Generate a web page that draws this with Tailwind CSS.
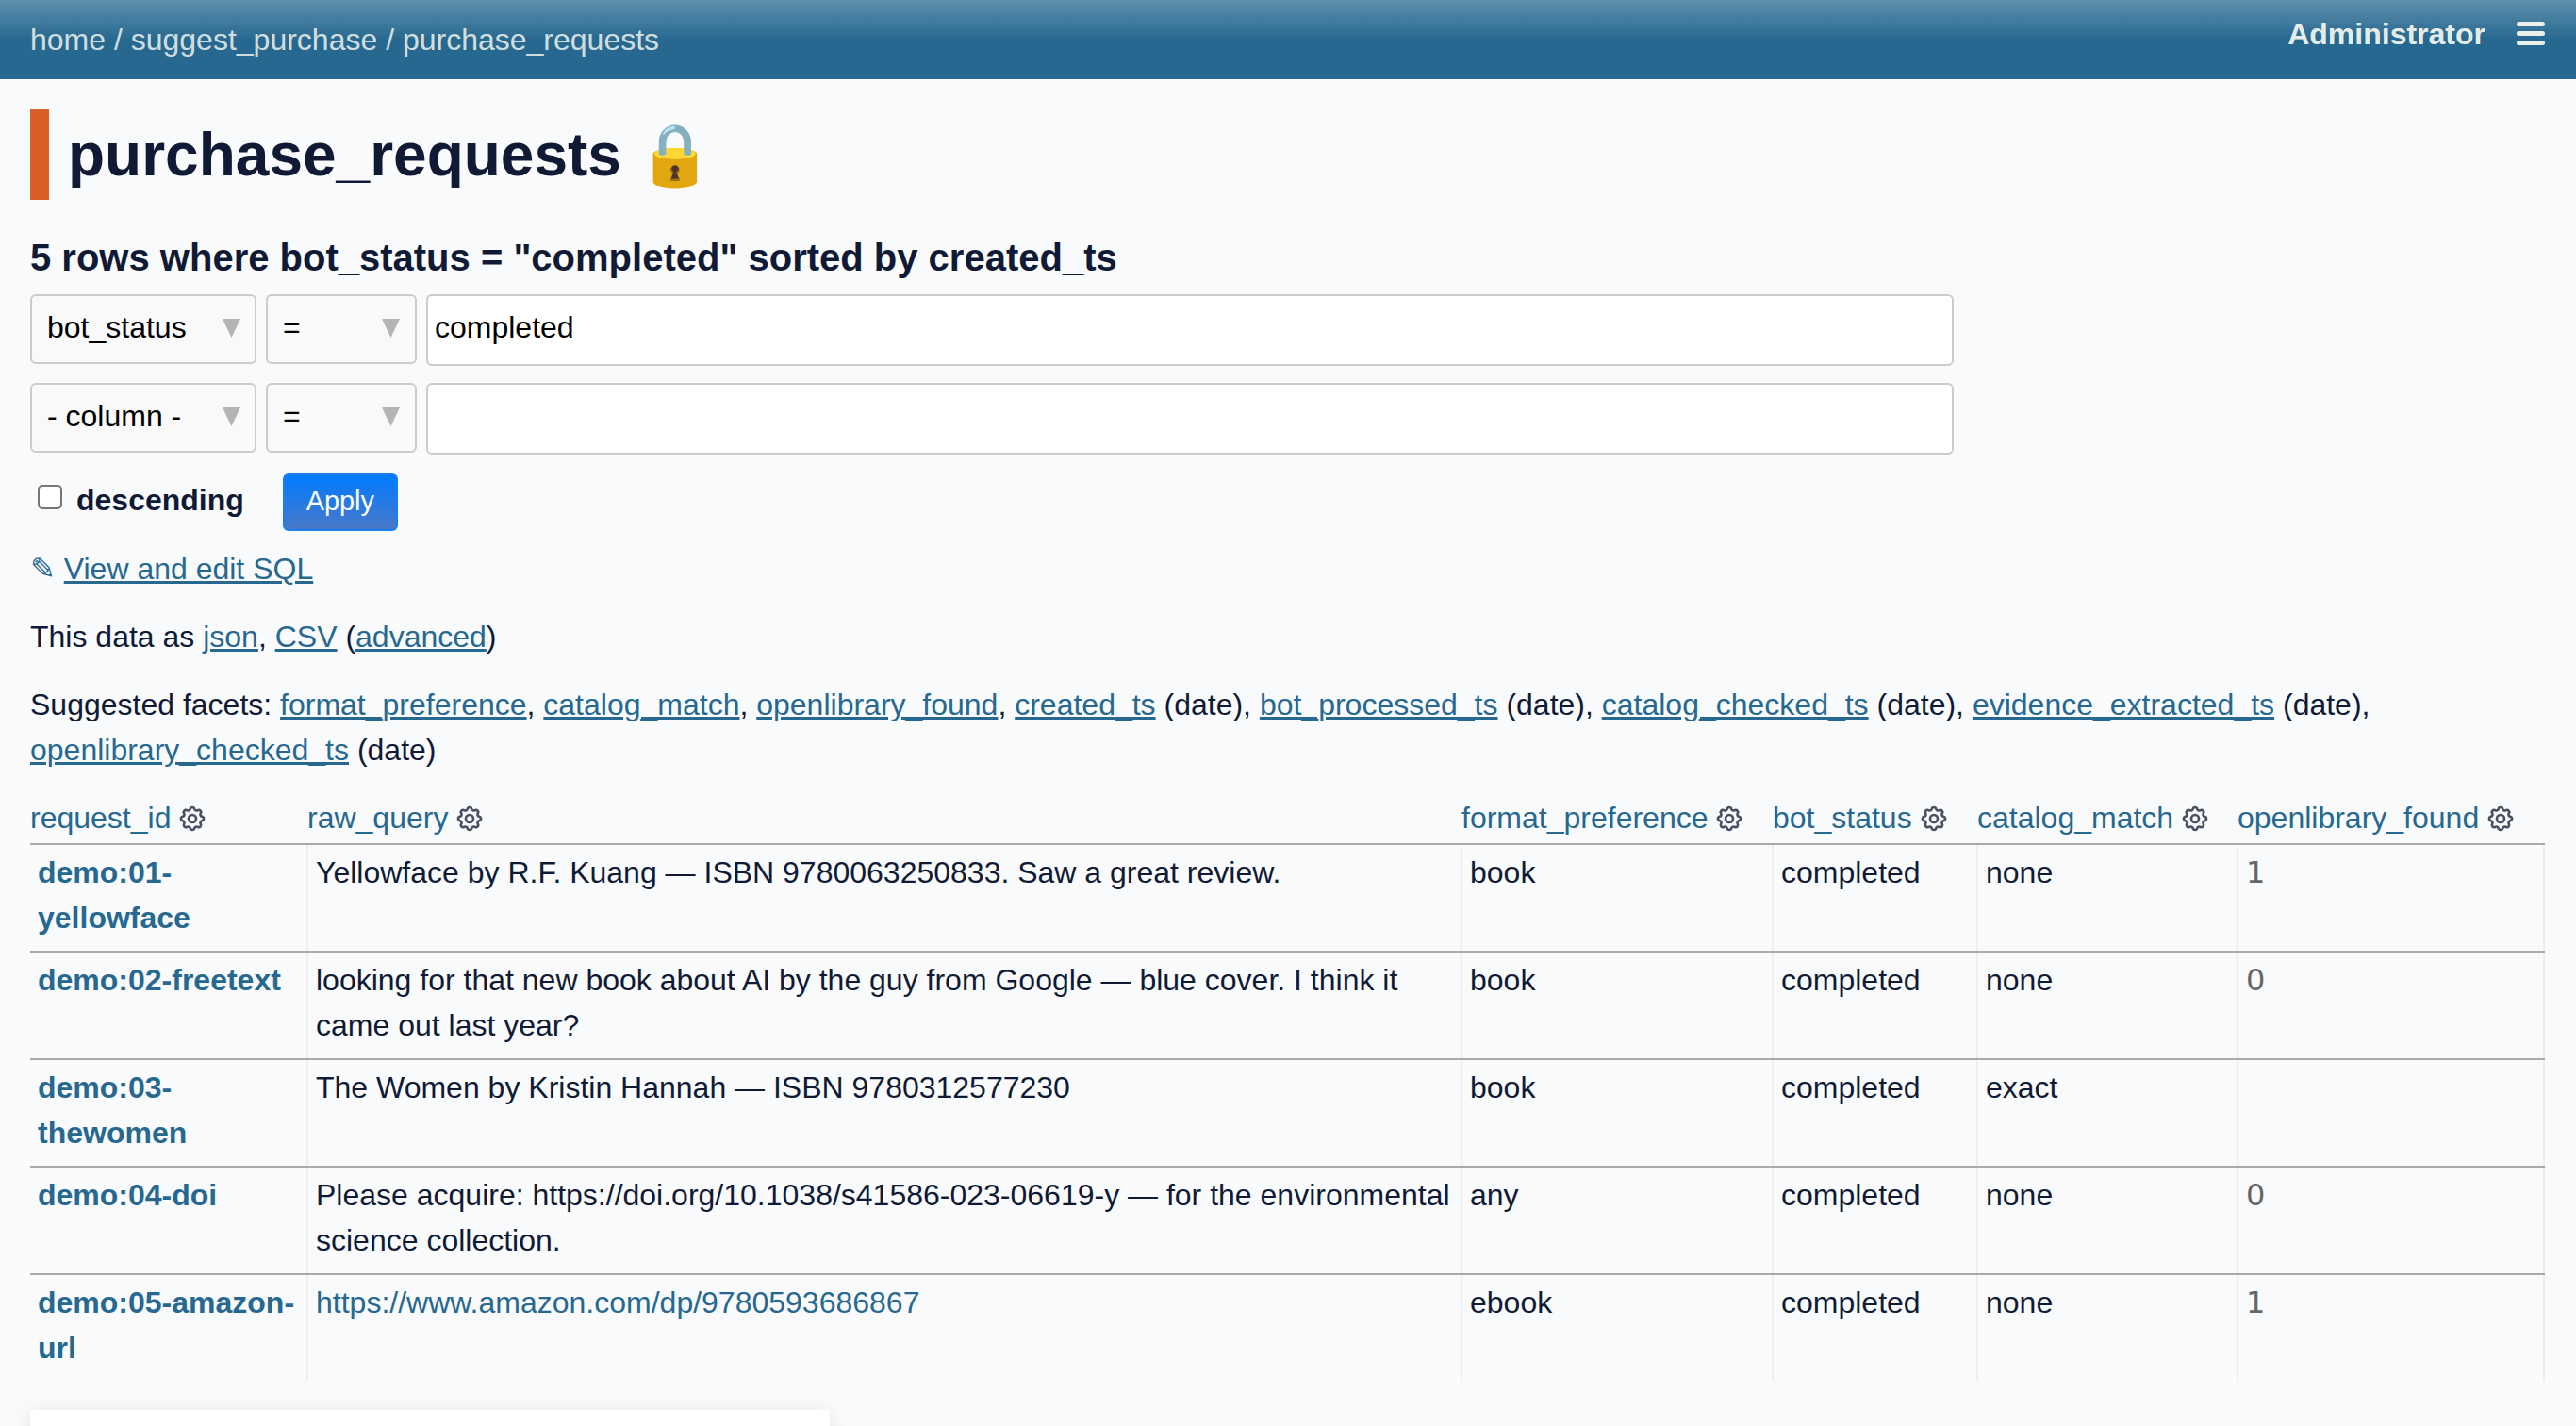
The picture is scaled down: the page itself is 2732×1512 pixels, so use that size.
<!DOCTYPE html>
<html lang="en">
<head>
<meta charset="utf-8">
<title>purchase_requests</title>
<script src="https://cdn.jsdelivr.net/npm/@tailwindcss/browser@4"></script>
</head>
<body class="h-[1512px] overflow-hidden bg-[#f8fafb] text-[32px] leading-[48px] text-[#111a35] font-['Liberation_Sans','DejaVu_Sans','Noto_Color_Emoji',sans-serif]">
<header class="h-[84px] bg-[linear-gradient(180deg,#6090ad_0%,#276890_50%)] pl-[32px] pr-[33px] pt-[18px] flex justify-between items-start text-[#fffff4e6]">
  <nav class="text-[#fffff4cc]"><a href="#">home</a> / <a href="#">suggest_purchase</a> / <a href="#">purchase_requests</a></nav>
  <div class="flex items-start gap-[33px]">
    <span class="font-bold leading-[37px]">Administrator</span>
    <div class="flex flex-col gap-[5px] w-[30px] pt-[5px]">
      <span class="block h-[5px] rounded-full bg-[#fffff4e6]"></span>
      <span class="block h-[5px] rounded-full bg-[#fffff4e6]"></span>
      <span class="block h-[5px] rounded-full bg-[#fffff4e6]"></span>
    </div>
  </div>
</header>
<main class="px-[32px]">
  <div class="mt-[32px] h-[96px] border-l-[20px] border-l-[#d95f28] pl-[20px]">
    <h1 class="text-[64px] leading-[96px] font-bold">purchase_requests <span>🔒</span></h1>
  </div>
  <h3 class="mt-[30px] mb-[8px] text-[40px] leading-[62px] font-bold">5 rows where bot_status = "completed" sorted by created_ts</h3>
  <form>
    <div class="flex items-start gap-[10px] mb-[18px]">
      <div class="relative w-[240px] h-[74px]">
        <select class="appearance-none w-full h-full border-2 border-[#ccc] rounded-[6px] bg-[#f9f9f9] pl-[16px] pb-[4px] text-black"><option>bot_status</option></select>
        <svg class="absolute left-[204px] top-[26px]" width="19" height="20" viewBox="0 0 19 20"><polygon points="0,0 19,0 9.5,20" fill="#b4b4b4"/></svg>
      </div>
      <div class="relative w-[160px] h-[74px]">
        <select class="appearance-none w-full h-full border-2 border-[#ccc] rounded-[6px] bg-[#f9f9f9] pl-[16px] pb-[4px] text-black"><option>=</option></select>
        <svg class="absolute left-[123px] top-[26px]" width="19" height="20" viewBox="0 0 19 20"><polygon points="0,0 19,0 9.5,20" fill="#b4b4b4"/></svg>
      </div>
      <input class="w-[1620px] h-[76px] border-2 border-[#ccc] rounded-[6px] bg-white px-[7px] pb-[5px] text-black" value="completed">
    </div>
    <div class="flex items-start gap-[10px]">
      <div class="relative w-[240px] h-[74px]">
        <select class="appearance-none w-full h-full border-2 border-[#ccc] rounded-[6px] bg-[#f9f9f9] pl-[16px] pb-[4px] text-black"><option>- column -</option></select>
        <svg class="absolute left-[204px] top-[26px]" width="19" height="20" viewBox="0 0 19 20"><polygon points="0,0 19,0 9.5,20" fill="#b4b4b4"/></svg>
      </div>
      <div class="relative w-[160px] h-[74px]">
        <select class="appearance-none w-full h-full border-2 border-[#ccc] rounded-[6px] bg-[#f9f9f9] pl-[16px] pb-[4px] text-black"><option>=</option></select>
        <svg class="absolute left-[123px] top-[26px]" width="19" height="20" viewBox="0 0 19 20"><polygon points="0,0 19,0 9.5,20" fill="#b4b4b4"/></svg>
      </div>
      <input class="w-[1620px] h-[76px] border-2 border-[#ccc] rounded-[6px] bg-white px-[7px] text-black" value="">
    </div>
    <div class="mt-[20px] flex items-start h-[61px]">
      <label class="flex items-start font-bold pl-[8px] mt-[4px]">
        <span class="block mt-[8px] w-[26px] h-[26px] border-2 border-[#767676] rounded-[5px] bg-white mr-[15px]"></span>descending
      </label>
      <button type="button" class="ml-[41px] w-[122px] h-[61px] rounded-[6px] border-2 border-[#1a7ef0] bg-[linear-gradient(180deg,#007bff,#4a78c8)] text-white text-[28.8px] leading-[40px] pb-[3px]">Apply</button>
    </div>
  </form>
  <p class="mt-[16px] text-[#276890]"><span>✎</span> <a href="#" class="underline">View and edit SQL</a></p>
  <p class="mt-[24px]">This data as <a href="#" class="underline text-[#276890]">json</a>, <a href="#" class="underline text-[#276890]">CSV</a> (<a href="#" class="underline text-[#276890]">advanced</a>)</p>
  <p class="mt-[24px]">Suggested facets: <a href="#" class="underline text-[#276890]">format_preference</a>, <a href="#" class="underline text-[#276890]">catalog_match</a>, <a href="#" class="underline text-[#276890]">openlibrary_found</a>, <a href="#" class="underline text-[#276890]">created_ts</a> (date), <a href="#" class="underline text-[#276890]">bot_processed_ts</a> (date), <a href="#" class="underline text-[#276890]">catalog_checked_ts</a> (date), <a href="#" class="underline text-[#276890]">evidence_extracted_ts</a> (date), <a href="#" class="underline text-[#276890]">openlibrary_checked_ts</a> (date)</p>
  <table class="mt-[24px] table-fixed border-collapse w-[2667px]">
    <colgroup>
      <col class="w-[294px]"><col class="w-[1224px]"><col class="w-[330px]"><col class="w-[217px]"><col class="w-[276px]"><col class="w-[325px]">
    </colgroup>
    <thead>
      <tr class="text-left">
        <th class="font-normal whitespace-nowrap border-b-2 border-b-[#aaa] pb-[3px]"><a href="#" class="text-[#276890]">request_id</a> <svg class="inline -ml-[2px] align-[-6px] text-[#4a4f63]" width="32" height="32" viewBox="0 0 24 24" fill="none" stroke="currentColor" stroke-width="2" stroke-linecap="round" stroke-linejoin="round"><path d="M10.325 4.317c.426-1.756 2.924-1.756 3.35 0a1.724 1.724 0 002.573 1.066c1.543-.94 3.31.826 2.37 2.37a1.724 1.724 0 001.065 2.572c1.756.426 1.756 2.924 0 3.35a1.724 1.724 0 00-1.066 2.573c.94 1.543-.826 3.31-2.37 2.37a1.724 1.724 0 00-2.572 1.065c-.426 1.756-2.924 1.756-3.35 0a1.724 1.724 0 00-2.573-1.066c-1.543.94-3.31-.826-2.37-2.37a1.724 1.724 0 00-1.065-2.572c-1.756-.426-1.756-2.924 0-3.35a1.724 1.724 0 001.066-2.573c-.94-1.543.826-3.31 2.37-2.37.996.608 2.296.07 2.572-1.065z"/><path d="M15 12a3 3 0 11-6 0 3 3 0 016 0z"/></svg></th>
        <th class="font-normal whitespace-nowrap border-b-2 border-b-[#aaa] pb-[3px]"><a href="#" class="text-[#276890]">raw_query</a> <svg class="inline -ml-[2px] align-[-6px] text-[#4a4f63]" width="32" height="32" viewBox="0 0 24 24" fill="none" stroke="currentColor" stroke-width="2" stroke-linecap="round" stroke-linejoin="round"><path d="M10.325 4.317c.426-1.756 2.924-1.756 3.35 0a1.724 1.724 0 002.573 1.066c1.543-.94 3.31.826 2.37 2.37a1.724 1.724 0 001.065 2.572c1.756.426 1.756 2.924 0 3.35a1.724 1.724 0 00-1.066 2.573c.94 1.543-.826 3.31-2.37 2.37a1.724 1.724 0 00-2.572 1.065c-.426 1.756-2.924 1.756-3.35 0a1.724 1.724 0 00-2.573-1.066c-1.543.94-3.31-.826-2.37-2.37a1.724 1.724 0 00-1.065-2.572c-1.756-.426-1.756-2.924 0-3.35a1.724 1.724 0 001.066-2.573c-.94-1.543.826-3.31 2.37-2.37.996.608 2.296.07 2.572-1.065z"/><path d="M15 12a3 3 0 11-6 0 3 3 0 016 0z"/></svg></th>
        <th class="font-normal whitespace-nowrap border-b-2 border-b-[#aaa] pb-[3px]"><a href="#" class="text-[#276890]">format_preference</a> <svg class="inline -ml-[2px] align-[-6px] text-[#4a4f63]" width="32" height="32" viewBox="0 0 24 24" fill="none" stroke="currentColor" stroke-width="2" stroke-linecap="round" stroke-linejoin="round"><path d="M10.325 4.317c.426-1.756 2.924-1.756 3.35 0a1.724 1.724 0 002.573 1.066c1.543-.94 3.31.826 2.37 2.37a1.724 1.724 0 001.065 2.572c1.756.426 1.756 2.924 0 3.35a1.724 1.724 0 00-1.066 2.573c.94 1.543-.826 3.31-2.37 2.37a1.724 1.724 0 00-2.572 1.065c-.426 1.756-2.924 1.756-3.35 0a1.724 1.724 0 00-2.573-1.066c-1.543.94-3.31-.826-2.37-2.37a1.724 1.724 0 00-1.065-2.572c-1.756-.426-1.756-2.924 0-3.35a1.724 1.724 0 001.066-2.573c-.94-1.543.826-3.31 2.37-2.37.996.608 2.296.07 2.572-1.065z"/><path d="M15 12a3 3 0 11-6 0 3 3 0 016 0z"/></svg></th>
        <th class="font-normal whitespace-nowrap border-b-2 border-b-[#aaa] pb-[3px]"><a href="#" class="text-[#276890]">bot_status</a> <svg class="inline -ml-[2px] align-[-6px] text-[#4a4f63]" width="32" height="32" viewBox="0 0 24 24" fill="none" stroke="currentColor" stroke-width="2" stroke-linecap="round" stroke-linejoin="round"><path d="M10.325 4.317c.426-1.756 2.924-1.756 3.35 0a1.724 1.724 0 002.573 1.066c1.543-.94 3.31.826 2.37 2.37a1.724 1.724 0 001.065 2.572c1.756.426 1.756 2.924 0 3.35a1.724 1.724 0 00-1.066 2.573c.94 1.543-.826 3.31-2.37 2.37a1.724 1.724 0 00-2.572 1.065c-.426 1.756-2.924 1.756-3.35 0a1.724 1.724 0 00-2.573-1.066c-1.543.94-3.31-.826-2.37-2.37a1.724 1.724 0 00-1.065-2.572c-1.756-.426-1.756-2.924 0-3.35a1.724 1.724 0 001.066-2.573c-.94-1.543.826-3.31 2.37-2.37.996.608 2.296.07 2.572-1.065z"/><path d="M15 12a3 3 0 11-6 0 3 3 0 016 0z"/></svg></th>
        <th class="font-normal whitespace-nowrap border-b-2 border-b-[#aaa] pb-[3px]"><a href="#" class="text-[#276890]">catalog_match</a> <svg class="inline -ml-[2px] align-[-6px] text-[#4a4f63]" width="32" height="32" viewBox="0 0 24 24" fill="none" stroke="currentColor" stroke-width="2" stroke-linecap="round" stroke-linejoin="round"><path d="M10.325 4.317c.426-1.756 2.924-1.756 3.35 0a1.724 1.724 0 002.573 1.066c1.543-.94 3.31.826 2.37 2.37a1.724 1.724 0 001.065 2.572c1.756.426 1.756 2.924 0 3.35a1.724 1.724 0 00-1.066 2.573c.94 1.543-.826 3.31-2.37 2.37a1.724 1.724 0 00-2.572 1.065c-.426 1.756-2.924 1.756-3.35 0a1.724 1.724 0 00-2.573-1.066c-1.543.94-3.31-.826-2.37-2.37a1.724 1.724 0 00-1.065-2.572c-1.756-.426-1.756-2.924 0-3.35a1.724 1.724 0 001.066-2.573c-.94-1.543.826-3.31 2.37-2.37.996.608 2.296.07 2.572-1.065z"/><path d="M15 12a3 3 0 11-6 0 3 3 0 016 0z"/></svg></th>
        <th class="font-normal whitespace-nowrap border-b-2 border-b-[#aaa] pb-[3px]"><a href="#" class="text-[#276890]">openlibrary_found</a> <svg class="inline -ml-[2px] align-[-6px] text-[#4a4f63]" width="32" height="32" viewBox="0 0 24 24" fill="none" stroke="currentColor" stroke-width="2" stroke-linecap="round" stroke-linejoin="round"><path d="M10.325 4.317c.426-1.756 2.924-1.756 3.35 0a1.724 1.724 0 002.573 1.066c1.543-.94 3.31.826 2.37 2.37a1.724 1.724 0 001.065 2.572c1.756.426 1.756 2.924 0 3.35a1.724 1.724 0 00-1.066 2.573c.94 1.543-.826 3.31-2.37 2.37a1.724 1.724 0 00-2.572 1.065c-.426 1.756-2.924 1.756-3.35 0a1.724 1.724 0 00-2.573-1.066c-1.543.94-3.31-.826-2.37-2.37a1.724 1.724 0 00-1.065-2.572c-1.756-.426-1.756-2.924 0-3.35a1.724 1.724 0 001.066-2.573c-.94-1.543.826-3.31 2.37-2.37.996.608 2.296.07 2.572-1.065z"/><path d="M15 12a3 3 0 11-6 0 3 3 0 016 0z"/></svg></th>
      </tr>
    </thead>
    <tbody class="[&_td]:px-2 [&_td]:pt-[5px] [&_td]:pb-[11px] [&_td]:align-top [&_td]:border-r-2 [&_td]:border-r-[#eee] [&_tr:not(:last-child)_td]:border-b-2 [&_tr:not(:last-child)_td]:border-b-[#aaa]">
      <tr>
        <td><a href="#" class="font-bold text-[#276890]">demo:01-yellowface</a></td>
        <td>Yellowface by R.F. Kuang — ISBN 9780063250833. Saw a great review.</td>
        <td>book</td><td>completed</td><td>none</td>
        <td class="font-['DejaVu_Sans',sans-serif] text-[#666]">1</td>
      </tr>
      <tr>
        <td><a href="#" class="font-bold text-[#276890]">demo:02-freetext</a></td>
        <td>looking for that new book about AI by the guy from Google — blue cover. I think it came out last year?</td>
        <td>book</td><td>completed</td><td>none</td>
        <td class="font-['DejaVu_Sans',sans-serif] text-[#666]">0</td>
      </tr>
      <tr>
        <td><a href="#" class="font-bold text-[#276890]">demo:03-thewomen</a></td>
        <td>The Women by Kristin Hannah — ISBN 9780312577230</td>
        <td>book</td><td>completed</td><td>exact</td>
        <td class="font-['DejaVu_Sans',sans-serif] text-[#666]"></td>
      </tr>
      <tr>
        <td><a href="#" class="font-bold text-[#276890]">demo:04-doi</a></td>
        <td>Please acquire: https://doi.org/10.1038/s41586-023-06619-y — for the environmental science collection.</td>
        <td>any</td><td>completed</td><td>none</td>
        <td class="font-['DejaVu_Sans',sans-serif] text-[#666]">0</td>
      </tr>
      <tr>
        <td><a href="#" class="font-bold text-[#276890]">demo:05-amazon-url</a></td>
        <td><a href="#" class="text-[#276890]">https://www.amazon.com/dp/9780593686867</a></td>
        <td>ebook</td><td>completed</td><td>none</td>
        <td class="font-['DejaVu_Sans',sans-serif] text-[#666]">1</td>
      </tr>
    </tbody>
  </table>
  <div class="mt-[31px] w-[848px] h-[60px] bg-white shadow-[0_4px_20px_rgba(0,0,0,0.1)]"></div>
</main>
</body>
</html>
